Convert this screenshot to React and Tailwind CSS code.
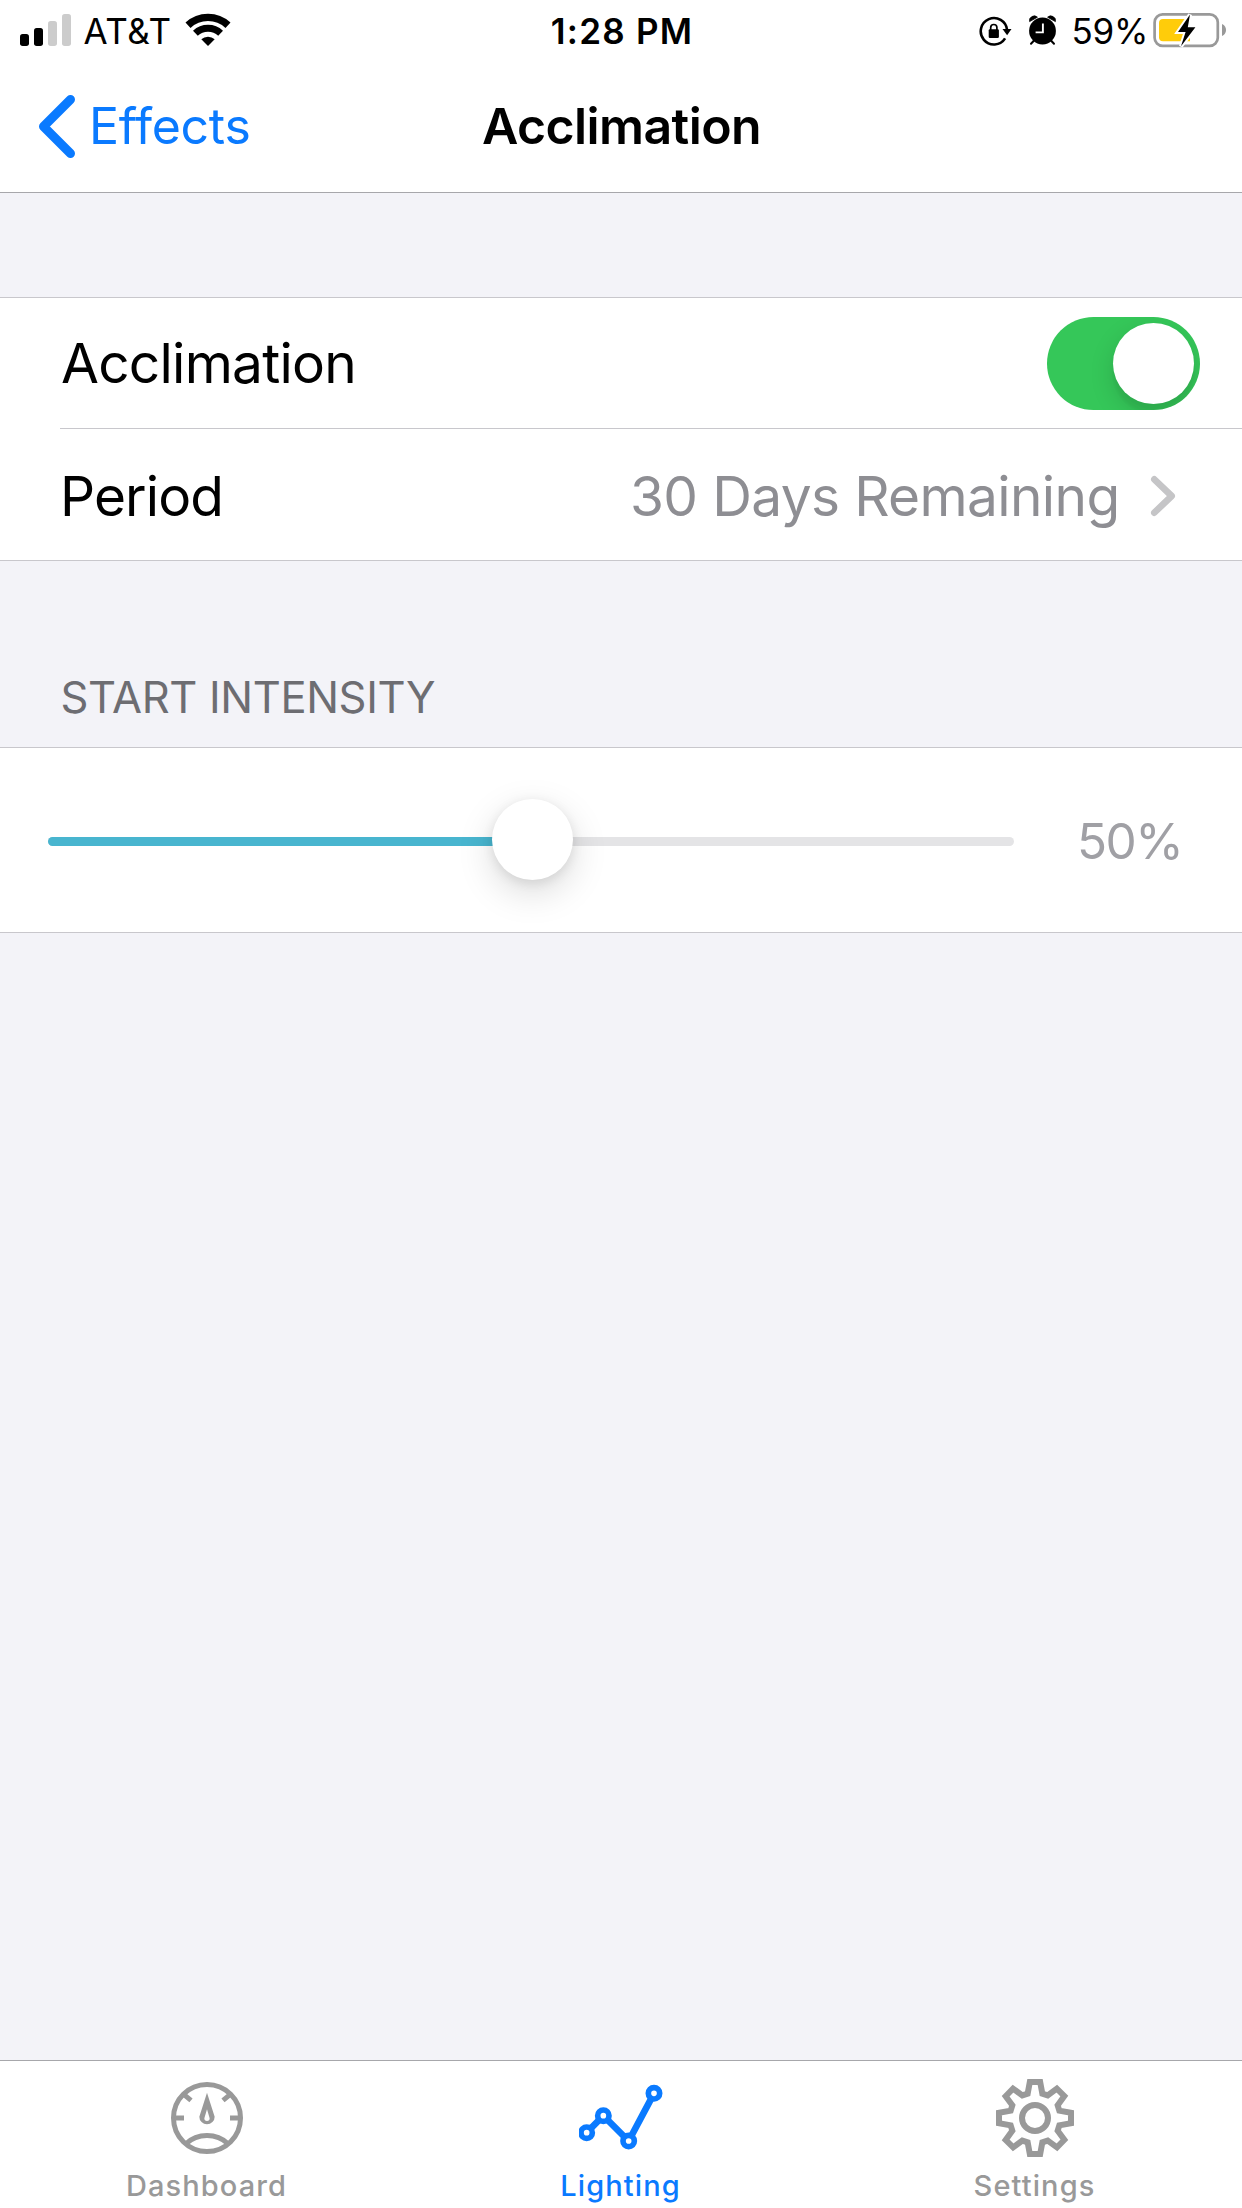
import React, { useState } from 'react';

// Status bar icons are drawn at full bar height (63px)
function SignalIcon() {
  return (
    <svg width="51" height="63" viewBox="20 0 51 63">
      <rect x="20" y="34" width="9" height="12" rx="2.7" fill="#000" />
      <rect x="34" y="28" width="9" height="18" rx="2.7" fill="#000" />
      <rect x="48" y="21" width="9" height="25" rx="2.7" fill="#ccc" />
      <rect x="62" y="14" width="9" height="32" rx="2.7" fill="#ccc" />
    </svg>
  );
}

function WifiIcon() {
  return (
    <svg width="46" height="63" viewBox="185 0 46 63" fill="none" stroke="#000">
      <path d="M188 25.2 A29.5 29.5 0 0 1 228 25.2" strokeWidth="7.4" />
      <path d="M195.4 33.2 A18.5 18.5 0 0 1 220.6 33.2" strokeWidth="7" />
      <path d="M201.3 39.3 A10 10 0 0 1 214.7 39.3 L208 46 Z" fill="#000" stroke="none" />
    </svg>
  );
}

function RotationLockIcon() {
  return (
    <svg width="33" height="63" viewBox="978.5 0 33 63">
      <path d="M1006.6 30 A13.2 13.2 0 1 0 1004.6 38.4" fill="none" stroke="#000" strokeWidth="2.6" />
      <path d="M1002 29 H1011 L1006.6 35.2 Z" />
      <rect x="988.2" y="29.3" width="10.2" height="8.6" rx="1.2" />
      <path d="M990.2 30 V27.6 A3.1 3.1 0 0 1 996.4 27.6 V30" fill="none" stroke="#000" strokeWidth="1.7" />
    </svg>
  );
}

function AlarmIcon() {
  return (
    <svg width="29" height="63" viewBox="1028 0 29 63">
      <circle cx="1042.5" cy="31" r="13.4" />
      <path d="M1029.6 21.6 A4.7 4.7 0 0 1 1037.4 17.2 Z" stroke="#000" strokeWidth="0.8" />
      <path d="M1055.4 21.6 A4.7 4.7 0 0 0 1047.6 17.2 Z" stroke="#000" strokeWidth="0.8" />
      <path d="M1034.5 40 L1031 43.8 M1050.5 40 L1054 43.8" stroke="#000" strokeWidth="2" strokeLinecap="round" />
      <path d="M1042.9 23.6 V32.4 H1035.6" fill="none" stroke="#fff" strokeWidth="1.9" />
    </svg>
  );
}

function BatteryIcon() {
  return (
    <svg width="74" height="63" viewBox="1153 0 74 63">
      <rect x="1154.6" y="14.4" width="63.2" height="31.4" rx="8" fill="none" stroke="#999" strokeWidth="2.7" />
      <path d="M1222 24 C1227.4 26 1227.4 34 1222 36 Z" fill="#999" />
      <path d="M1163 19 H1190 V41.2 H1163 A4 4 0 0 1 1159 37.2 V23 A4 4 0 0 1 1163 19 Z" fill="#ffcc0a" />
      <path
        d="M1190 14.6 L1178 32 H1185.6 L1181 46.3 L1195.4 27.3 H1187.8 Z"
        stroke="#fff"
        strokeWidth="4"
        paintOrder="stroke"
      />
    </svg>
  );
}

function DashboardIcon() {
  return (
    <svg width="84" height="84" viewBox="-126 -126 252 252" fill="none" stroke="currentColor" strokeWidth="15">
      <circle r="100.5" />
      <path d="M-97 0 H-69 M97 0 H69 M-70 -71 L-48 -53 M70 -71 L48 -53" />
      <path d="M-64 78 A94 94 0 0 1 64 78" />
      <path
        d="M0 -76 L23 -4 A23 23 0 1 1 -23 -4 Z M0 -26 L-8 1 A8 8 0 1 0 8 1 Z"
        fill="currentColor"
        fillRule="evenodd"
        stroke="none"
      />
    </svg>
  );
}

function LightingIcon() {
  return (
    <svg width="84" height="84" viewBox="-124 -126 252 252" fill="none" stroke="currentColor" strokeWidth="17">
      <path d="M-101 44 L-51 -7 L25 69 L101 -74" strokeWidth="20" />
      <g fill="#fff">
        <circle cx="-101" cy="44" r="17" />
        <circle cx="-51" cy="-7" r="17" />
        <circle cx="25" cy="69" r="17" />
        <circle cx="101" cy="-74" r="17" />
      </g>
    </svg>
  );
}

function SettingsIcon() {
  return (
    <svg width="84" height="84" viewBox="-126 -126 252 252" fill="none" stroke="currentColor" strokeWidth="18">
      <circle r="39" />
      <path d="M15.5 -108 L22 -73 L38 -68 L65.5 -88 L88 -66 L68 -38 L73 -22 L108 -15.5 L108 15.5 L73 22 L68 38 L88 65.5 L66 88 L38 68 L22 73 L15.5 108 L-15.5 108 L-22 73 L-38 68 L-65.5 88 L-88 66 L-68 38 L-73 22 L-108 15.5 L-108 -15.5 L-73 -22 L-68 -38 L-88 -65.5 L-66 -88 L-38 -68 L-22 -73 L-15.5 -108 Z" />
    </svg>
  );
}

function StatusBar() {
  return (
    <div className="grid grid-cols-3 items-center h-[63px] text-[35px] leading-none">
      <div className="flex items-center pl-5">
        <SignalIcon />
        <span className="ml-[12.5px] tracking-[0.6px]">AT&amp;T</span>
        <span className="ml-[13.5px]">
          <WifiIcon />
        </span>
      </div>
      <div className="pl-0.5 text-center font-semibold tracking-[1.25px]">1:28 PM</div>
      <div className="flex items-center justify-end pr-[15px]">
        <RotationLockIcon />
        <span className="ml-[16.5px]">
          <AlarmIcon />
        </span>
        <span className="ml-[14.5px] mr-[5px] tracking-[-0.3px]">59%</span>
        <BatteryIcon />
      </div>
    </div>
  );
}

function NavBar() {
  return (
    <div className="grid grid-cols-3 items-center h-[129px] pb-[3px] text-[50px] leading-none">
      <button className="flex items-center pl-[38px] text-[#0a7aff]">
        <svg width="38" height="64" viewBox="38 94 38 64" fill="none">
          <path
            d="M70.5 99.5 L43.5 126.5 L70.5 153.5"
            stroke="currentColor"
            strokeWidth="9"
            strokeLinecap="round"
            strokeLinejoin="round"
          />
        </svg>
        <span className="ml-[13px] tracking-[-0.3px]">Effects</span>
      </button>
      <h1 className="pl-px text-center font-semibold tracking-[-0.6px]">Acclimation</h1>
    </div>
  );
}

function Toggle({ on, onChange }) {
  return (
    <button
      role="switch"
      aria-checked={on}
      onClick={() => onChange(!on)}
      className={`flex w-[153px] h-[93px] p-1.5 rounded-full overflow-hidden ${on ? 'justify-end bg-[#35c759]' : 'justify-start bg-[#e9e9eb]'}`}
    >
      <span className="w-[81px] h-[81px] rounded-full bg-white shadow-[0_9px_24px_rgba(0,0,0,0.15),0_9px_3px_rgba(0,0,0,0.04)]" />
    </button>
  );
}

function Slider({ value }) {
  return (
    <div className="relative w-[966px] h-[81px] pt-[38px]">
      <div className="h-[9px] rounded-full bg-[#e4e4e6] overflow-hidden">
        <div className="h-full bg-[#48b5cf]" style={{ width: `${value}%` }} />
      </div>
      <div
        className="absolute top-0 w-[81px] h-[81px] -ml-[39px] rounded-full bg-white shadow-[0_12px_36px_rgba(0,0,0,0.15),0_3px_12px_rgba(0,0,0,0.09)]"
        style={{ left: `${value}%` }}
      />
    </div>
  );
}

const tabs = [
  { name: 'Dashboard', icon: DashboardIcon },
  { name: 'Lighting', icon: LightingIcon },
  { name: 'Settings', icon: SettingsIcon },
];

function TabBar({ active, onSelect }) {
  return (
    <nav className="grid grid-cols-3 h-[148px] border-t border-[#a7a7ab] bg-white">
      {tabs.map(({ name, icon: Icon }) => (
        <button
          key={name}
          onClick={() => onSelect(name)}
          className={`flex flex-col items-center pt-[15px] ${name === active ? 'text-[#0a7aff]' : 'text-[#999]'}`}
        >
          <Icon />
          <span className="mt-[11px] mr-px text-[29px] leading-[30px] font-medium tracking-[1.1px]">{name}</span>
        </button>
      ))}
    </nav>
  );
}

function App() {
  const [enabled, setEnabled] = useState(true);
  const [tab, setTab] = useState('Lighting');
  const intensity = 50;

  return (
    <div className="flex flex-col w-[1242px] h-[2208px] bg-[#f3f3f8] text-black font-['Inter',sans-serif]">
      <header className="bg-white border-b border-[#a7a7ab]">
        <StatusBar />
        <NavBar />
      </header>

      <main className="flex-1 pt-[104px]">
        <section className="bg-white border-y border-[#c8c7cc] text-[55px] leading-none">
          <div className="flex items-center justify-between h-[130px] pl-[61px] pr-[42px]">
            <span className="tracking-[-0.75px]">Acclimation</span>
            <Toggle on={enabled} onChange={setEnabled} />
          </div>
          <div className="ml-[60px] h-px bg-[#c8c7cc]" />
          <div className="flex items-center h-[131px] pt-[3px] pl-[60px] pr-[66px]">
            <span className="tracking-[-0.9px]">Period</span>
            <span className="ml-auto text-[#8e8e93] tracking-[-0.64px]">30 Days Remaining</span>
            <svg className="ml-[30.5px]" width="26" height="42" viewBox="1150 474 26 42" fill="none">
              <path
                d="M1154.3 478.3 L1171.7 495 L1154.3 511.7"
                stroke="#c5c5c7"
                strokeWidth="6.6"
                strokeLinecap="round"
                strokeLinejoin="round"
              />
            </svg>
          </div>
        </section>

        <h2 className="flex items-end h-[186px] pl-[60.5px] pb-[28px] text-[43.5px] leading-[44px] text-[#6d6d72] tracking-[-0.36px]">
          START INTENSITY
        </h2>
        <section className="flex items-start h-[186px] pt-[51px] pl-12 bg-white border-y border-[#c8c7cc]">
          <Slider value={intensity} />
          <span className="ml-[63px] text-[49.5px] leading-[84px] text-[#a0a0a5] tracking-[-1.6px]">{intensity}%</span>
        </section>
      </main>

      <TabBar active={tab} onSelect={setTab} />
    </div>
  );
}

export default App;
